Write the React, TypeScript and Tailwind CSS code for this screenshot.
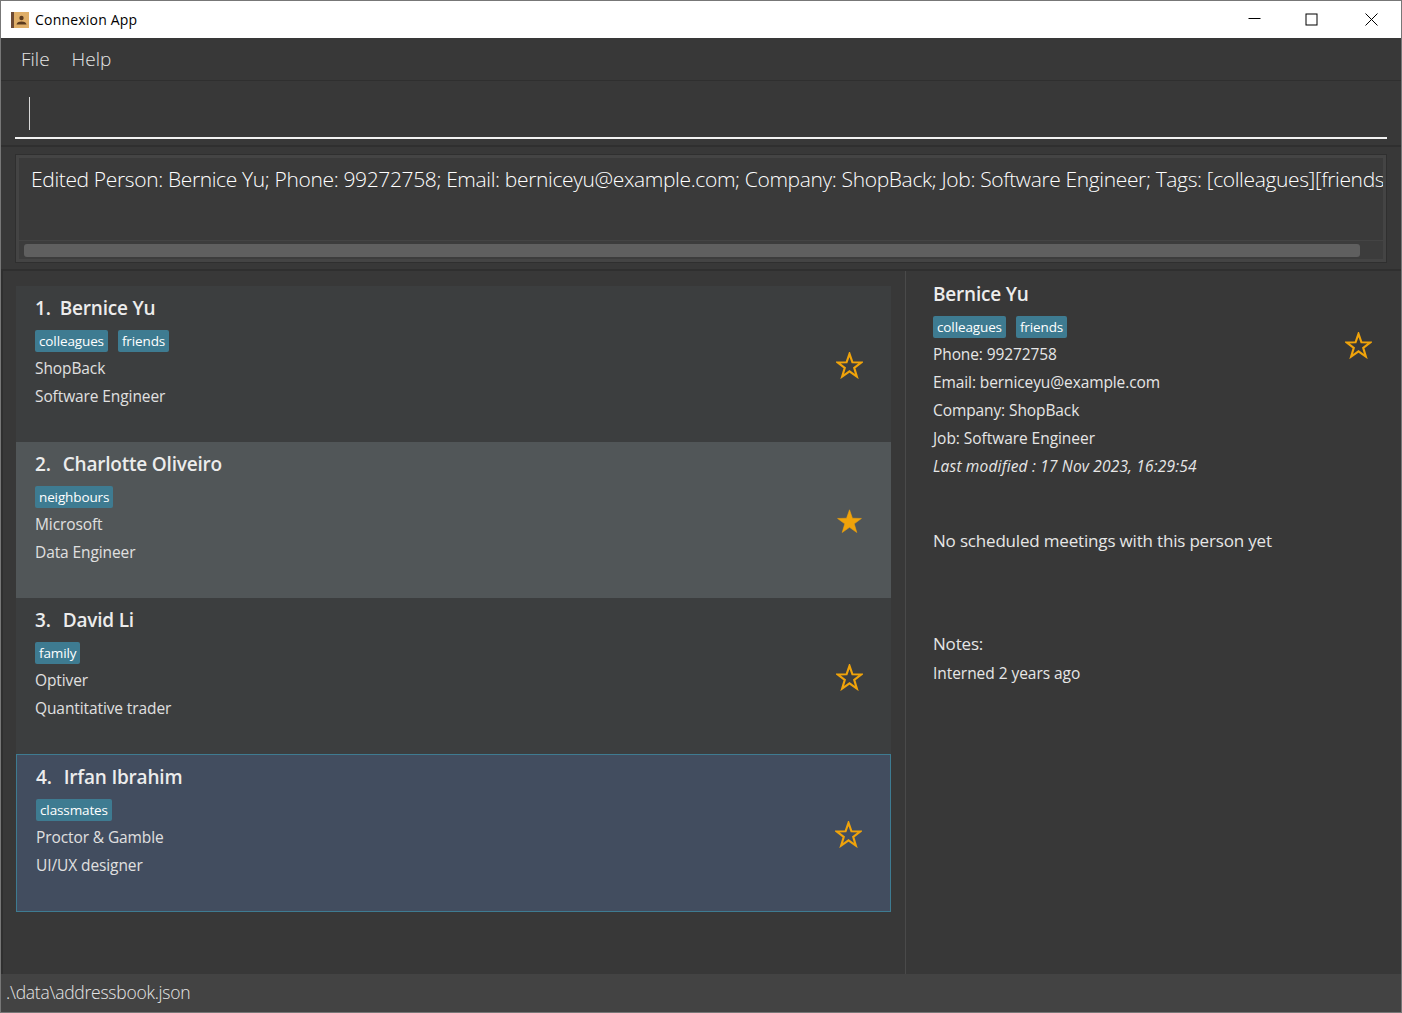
import React from "react";

const STAR = "M12 1.6 L14.6 9.1 L22.6 9.3 L16.2 14.1 L18.5 21.8 L12 17.2 L5.5 21.8 L7.8 14.1 L1.4 9.3 L9.4 9.1 Z";

function Star({ filled }: { filled?: boolean }) {
  return (
    <svg viewBox="0 0 24 24" className="h-[27px] w-[27px] shrink-0">
      <path
        d={STAR}
        fill={filled ? "#f0a30a" : "none"}
        stroke="#f0a30a"
        strokeWidth={filled ? 0.5 : 1.9}
      />
    </svg>
  );
}

function Tag({ children }: { children: string }) {
  return (
    <span className="flex h-[22px] items-center rounded-[2px] bg-[#3e7b91] px-[4px] text-[13.5px] tracking-[-0.12px] text-white">
      {children}
    </span>
  );
}

type Person = { n: number; name: string; tags: string[]; company: string; job: string; filled?: boolean };

const people: Person[] = [
  { n: 1, name: "Bernice Yu", tags: ["colleagues", "friends"], company: "ShopBack", job: "Software Engineer" },
  { n: 2, name: "Charlotte Oliveiro", tags: ["neighbours"], company: "Microsoft", job: "Data Engineer", filled: true },
  { n: 3, name: "David Li", tags: ["family"], company: "Optiver", job: "Quantitative trader" },
  { n: 4, name: "Irfan Ibrahim", tags: ["classmates"], company: "Proctor & Gamble", job: "UI/UX designer" },
];

function Card({ p }: { p: Person }) {
  const selected = p.n === 4;
  const bg = selected
    ? "h-[158px] border border-[#3e7b91] bg-[#424d5f] pl-[19px] pr-[28px] pt-[8px]"
    : p.n === 2
      ? "h-[156px] bg-[#515658] pl-[19px] pr-[28px] pt-[8px]"
      : "h-[156px] bg-[#3c3e3f] pl-[19px] pr-[28px] pt-[8px]";
  return (
    <div className={`flex items-center justify-between ${bg}`}>
      <div className="flex h-full flex-col self-start">
        <div
          className={`flex h-[28px] items-center text-[19px] font-semibold leading-[28px] tracking-[-0.2px] text-[#ececec] ${
            p.n === 1 ? "gap-[9px]" : "gap-[12px]"
          }`}
        >
          <span>{p.n}.</span>
          <span>{p.name}</span>
        </div>
        <div className="mt-[8px] flex gap-[10px]">
          {p.tags.map((t) => (
            <Tag key={t}>{t}</Tag>
          ))}
        </div>
        <div className="mt-[2px] text-[15.5px] leading-[28px] tracking-[-0.1px] text-[#e0e0e0]">{p.company}</div>
        <div className="text-[15.5px] leading-[28px] tracking-[-0.1px] text-[#e0e0e0]">{p.job}</div>
      </div>
      <div className="-mt-[5px]">
        <Star filled={p.filled} />
      </div>
    </div>
  );
}

export default function App() {
  return (
    <div
      className="flex h-[1013px] w-[1402px] flex-col overflow-hidden border border-b-0 border-[#777777] bg-[#383838]"
      style={{ fontFamily: '"Open Sans", "Noto Sans", sans-serif' }}
    >
      {/* title bar */}
      <div className="flex h-[37px] shrink-0 items-center justify-between bg-white pl-[10px]">
        <div className="flex items-center gap-[6px]">
          <svg viewBox="0 0 18 16" className="h-[16px] w-[18px]">
            <rect x="0" y="0" width="18" height="16" fill="#dfae68" />
            <rect x="0" y="0" width="3" height="16" fill="#6d4a34" />
            <circle cx="10.5" cy="6" r="2.2" fill="#5b3a1e" />
            <path d="M5.5 12.5 Q6 9.5 10.5 9.5 Q15 9.5 15.5 12.5 Z" fill="#5b3a1e" />
          </svg>
          <span className="text-[14px] tracking-[0.2px] text-black">Connexion App</span>
        </div>
        <div className="flex items-center">
          <div className="flex h-[37px] w-[56px] items-center justify-center">
            <svg width="13" height="13" viewBox="0 0 13 13">
              <path d="M0.5 5.5H12.5" stroke="#000" strokeWidth="1" />
            </svg>
          </div>
          <div className="flex h-[37px] w-[59px] items-center justify-center">
            <svg width="13" height="13" viewBox="0 0 13 13" fill="none">
              <rect x="1" y="1" width="11" height="11" stroke="#000" strokeWidth="1" />
            </svg>
          </div>
          <div className="flex h-[37px] w-[60px] items-center justify-center">
            <svg width="13" height="13" viewBox="0 0 13 13">
              <path d="M0.5 0.5L12.5 12.5M12.5 0.5L0.5 12.5" stroke="#000" strokeWidth="1" />
            </svg>
          </div>
        </div>
      </div>

      {/* menu */}
      <div className="flex h-[43px] shrink-0 items-center gap-[22px] border-b border-[#2f2f2f] pl-[20px] text-[19px] font-light text-[#e4e4e4]">
        <span>File</span>
        <span>Help</span>
      </div>

      {/* command box */}
      <div className="flex h-[66px] shrink-0 flex-col border-b-[2px] border-[#2f2f2f] px-[14px] pt-[16px]">
        <div className="flex h-[42px] shrink-0 items-start border-b-2 border-[#f2f2f2] pl-[14px]">
          <div className="h-[33px] w-px bg-[#d8d8d8]" />
        </div>
      </div>

      {/* result display */}
      <div className="flex h-[124px] shrink-0 border-b-[2px] border-[#2f2f2f] px-[14px] pb-[6px] pt-[7px]">
        <div className="flex w-full flex-col overflow-hidden border border-[#2f2f2f] bg-[#3a3a3a]">
          <div className="flex min-h-0 flex-1 flex-col border-[3px] border-[#444444]">
            <div className="flex-1 overflow-hidden whitespace-nowrap pl-[12px] pt-[5px] text-[21px] font-light leading-[32px] tracking-[-0.36px] text-white">
              Edited Person: Bernice Yu; Phone: 99272758; Email: berniceyu@example.com; Company: ShopBack; Job: Software Engineer; Tags: [colleagues][friends]
            </div>
            <div className="flex h-[19px] shrink-0 items-start border-t border-[#444444] bg-[#3c3c3c] pl-[5px] pr-[23px] pt-[3px]">
              <div className="h-[13px] w-full rounded-[3px] bg-[#5f5f5f]" />
            </div>
          </div>
        </div>
      </div>

      {/* main */}
      <div className="flex min-h-0 flex-1">
        <div className="w-[905px] shrink-0 border-l-[2px] border-r border-[#2f2f2f] border-r-[#4a4a4a] pl-[13px] pr-[14px] pt-[15px]">
          <div className="flex flex-col">
            {people.map((p) => (
              <Card key={p.n} p={p} />
            ))}
          </div>
        </div>
        <div className="relative flex-1 pl-[27px] pt-[9px] text-[#e6e6e6]">
          <div className="text-[19px] font-semibold leading-[28px] tracking-[-0.2px] text-[#ececec]">Bernice Yu</div>
          <div className="mt-[8px] flex gap-[10px]">
            <Tag>colleagues</Tag>
            <Tag>friends</Tag>
          </div>
          <div className="mt-[2px] text-[15.5px] leading-[28px] tracking-[-0.1px]">Phone: 99272758</div>
          <div className="text-[15.5px] leading-[28px] tracking-[-0.1px]">Email: berniceyu@example.com</div>
          <div className="text-[15.5px] leading-[28px] tracking-[-0.1px]">Company: ShopBack</div>
          <div className="text-[15.5px] leading-[28px] tracking-[-0.05px]">Job: Software Engineer</div>
          <div className="text-[15.5px] italic leading-[28px] tracking-[0.17px]">Last modified : 17 Nov 2023, 16:29:54</div>
          <div className="mt-[47px] text-[17px] leading-[28px] tracking-[-0.18px]">No scheduled meetings with this person yet</div>
          <div className="mt-[75px] text-[17px] leading-[28px] tracking-[-0.18px]">Notes:</div>
          <div className="mt-[1px] text-[15.5px] leading-[28px] tracking-[-0.05px]">Interned 2 years ago</div>
          <div className="absolute left-[439px] top-[61px]">
            <Star />
          </div>
        </div>
      </div>

      {/* status bar */}
      <div className="flex h-[38px] shrink-0 items-center bg-[#434343] pb-[2px] pl-[5px] text-[17.5px] font-light tracking-[-0.25px] text-[#e6e6e6]">
        .\data\addressbook.json
      </div>
      <div className="h-px shrink-0 bg-[#777777]" />
    </div>
  );
}
